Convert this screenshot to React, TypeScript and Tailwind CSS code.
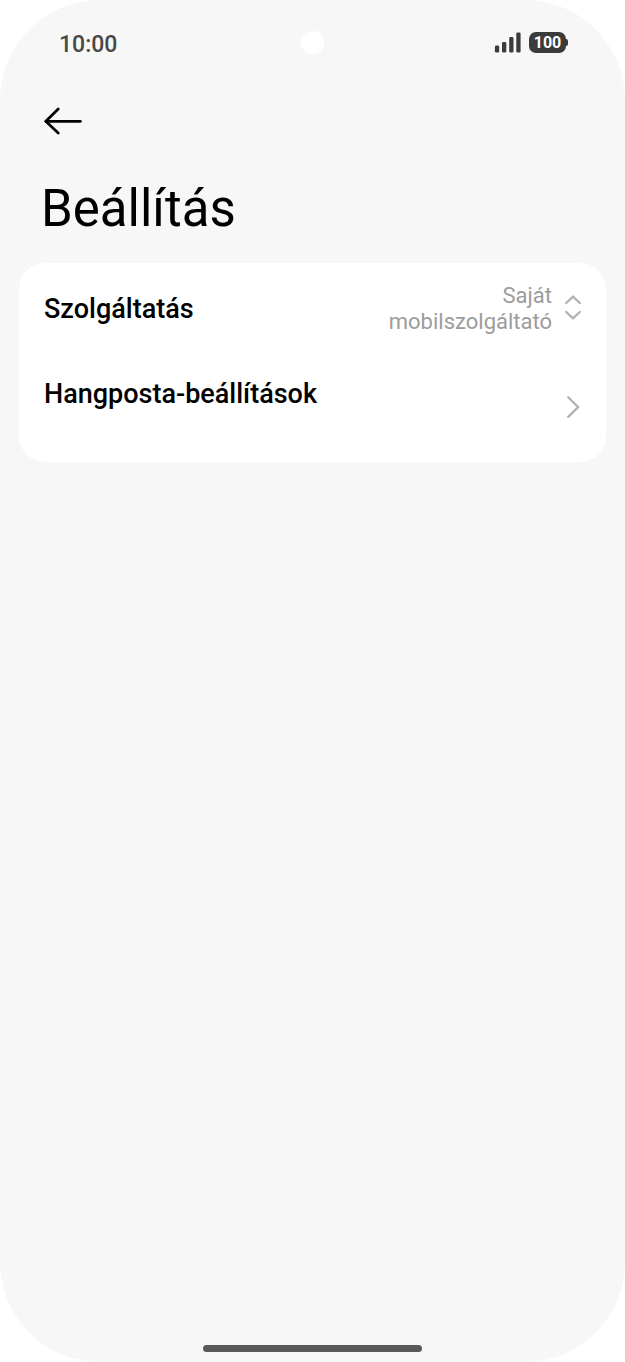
import React from "react";

function SignalIcon() {
  return (
    <svg width="27" height="22" viewBox="0 0 27 22" fill="#3b3b3b" aria-hidden="true">
      <rect x="0.9" y="13.6" width="4.3" height="7" rx="1.4" />
      <rect x="8" y="10" width="4.3" height="10.6" rx="1.4" />
      <rect x="15.2" y="5" width="4.3" height="15.6" rx="1.4" />
      <rect x="22.3" y="0.4" width="4.3" height="20.2" rx="1.4" />
    </svg>
  );
}

function Battery({ level }: { level: number }) {
  return (
    <div className="flex items-center">
      <span className="flex h-[21px] w-[37px] items-center justify-center rounded-[7px] bg-[#3b3b3b] text-[16px] leading-[20px] font-bold text-white">
        {level}
      </span>
      <span className="h-[7px] w-[2px] rounded-r-sm bg-[#3b3b3b]" />
    </div>
  );
}

function StatusBar() {
  return (
    <div className="grid h-[85px] grid-cols-[1fr_auto_1fr] items-center px-[57px]">
      <time className="pt-1 pl-0.5 text-[23px] leading-[28px] font-medium text-[#484848]">10:00</time>
      <span className="size-[23px] rounded-full bg-white" />
      <div className="flex items-center justify-end gap-2">
        <SignalIcon />
        <Battery level={100} />
      </div>
    </div>
  );
}

function BackIcon() {
  return (
    <svg width="38" height="28" viewBox="0 0 38 28" fill="none" stroke="#000" strokeWidth="2.7" strokeLinecap="round" strokeLinejoin="round" aria-hidden="true">
      <path d="M14.2 2 L1.8 14.3 L14.2 26" />
      <path d="M2 14.3 H36.4" />
    </svg>
  );
}

function SelectorIcon() {
  return (
    <svg width="18" height="26" viewBox="0 0 18 26" fill="none" stroke="#b3b3b3" strokeWidth="2.4" strokeLinecap="round" strokeLinejoin="round" aria-hidden="true">
      <path d="M2.2 8 L9 1.6 L15.8 8" />
      <path d="M2.2 17 L9 23.4 L15.8 17" />
    </svg>
  );
}

function ChevronIcon() {
  return (
    <svg width="18" height="24" viewBox="0 0 18 24" fill="none" stroke="#b3b3b3" strokeWidth="2.3" strokeLinecap="round" strokeLinejoin="round" aria-hidden="true">
      <path d="M4.2 1.3 L14.2 11.1 L4.2 20.9" />
    </svg>
  );
}

export default function App() {
  return (
    <div className="min-h-screen bg-white font-['Roboto',sans-serif]">
      <div className="flex min-h-screen flex-col rounded-[100px] bg-[#f7f7f7]">
        <StatusBar />
        <main className="flex-1">
          <header className="px-[41px]">
            <button type="button" aria-label="Vissza" className="flex h-[72px] items-center px-[3px]">
              <BackIcon />
            </button>
            <h1 className="mt-[22px] text-[51px] leading-[60px] text-black">Beállítás</h1>
          </header>
          <section className="mx-[19px] mt-6 overflow-hidden rounded-[26px] bg-white">
            <button type="button" className="flex h-[90px] w-full items-center pr-6 pl-[25px] text-left">
              <span className="flex-1 pt-0.5 text-[27px] leading-[36px] font-medium text-black">Szolgáltatás</span>
              <span className="mr-3 w-[180px] pt-0.5 text-right text-[22px] leading-[26px] text-[#9c9c9c]">
                Saját mobilszolgáltató
              </span>
              <SelectorIcon />
            </button>
            <button type="button" className="flex h-[109px] w-full items-center pr-6 pl-[25px] text-left">
              <span className="flex-1 pb-7 text-[27px] leading-[36px] font-medium text-black">
                Hangposta-beállítások
              </span>
              <ChevronIcon />
            </button>
          </section>
        </main>
        <div className="flex justify-center pb-[10px]">
          <span className="h-[7px] w-[35%] rounded-full bg-[#595959]" />
        </div>
      </div>
    </div>
  );
}
